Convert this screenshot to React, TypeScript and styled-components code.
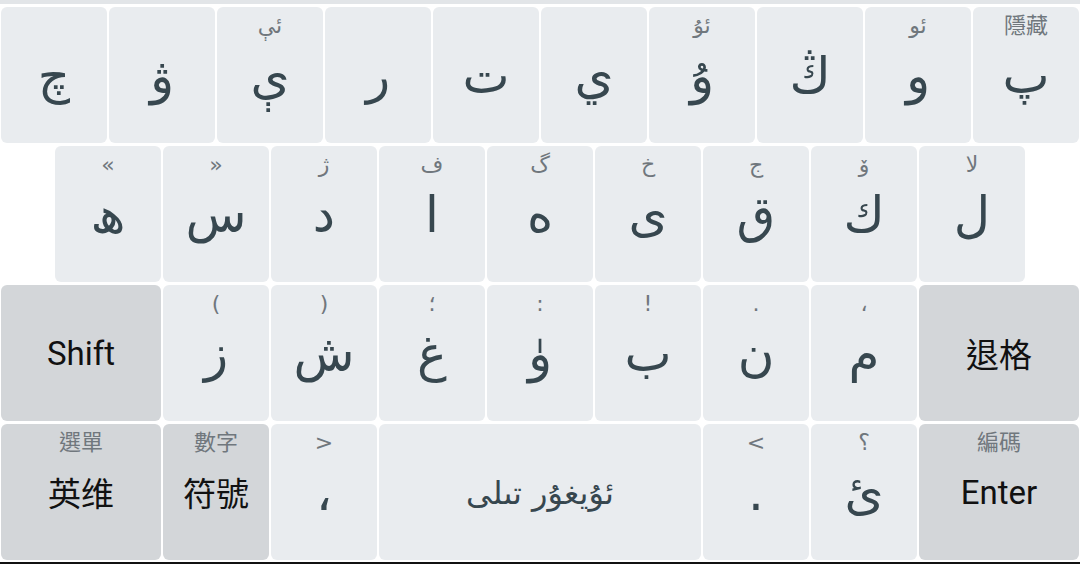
import React from 'react'
import styled, { createGlobalStyle } from 'styled-components'

interface KeyDef {
  main: string;
  hint?: string;
  units?: number;
  fn?: boolean;
  latin?: boolean;
}

const GlobalStyle = createGlobalStyle`
html, body {
  margin:0;
  padding:0;
  background:#fff;
}
body {
  font-family: Roboto, "DejaVu Sans", "Noto Sans CJK TC", sans-serif;
}
`

const Screen = styled.div`
width:1080px;
height:564px;
box-sizing:border-box;
display:flex;
flex-direction:column;
background:#fff;
border-bottom:2px solid #111;
overflow:hidden;
`

const TopBar = styled.div`
height:4px;
flex:none;
background:#e2e5e8;
`

const Board = styled.div`
display:flex;
flex-direction:column;
gap:3px;
padding:3px 1px 0;
`

const Row = styled.div<{ $indent?: number }>`
display:flex;
gap:2px;
height:136px;
padding-left:${(p) => p.$indent ?? 0}px;
`

const Key = styled.div<{ $units: number; $fn?: boolean }>`
flex:none;
width:${(p) => p.$units * 108 - 2}px;
border-radius:6px;
background:${(p) => (p.$fn ? '#d3d6d9' : '#e9ecef')};
display:flex;
flex-direction:column;
align-items:center;
`

const Hint = styled.span`
height:38px;
box-sizing:border-box;
padding-top:5px;
font-size:22px;
line-height:28px;
color:#70777d;
font-family: "DejaVu Sans", "Noto Sans CJK TC", sans-serif;
`

const Label = styled.span<{ $latin?: boolean; $small?: boolean }>`
flex:1;
display:flex;
align-items:center;
justify-content:center;
padding-bottom:${(p) => (p.$latin ? '38px' : '36px')};
font-size:${(p) => (p.$latin ? '33px' : p.$small ? '32px' : '50px')};
color:${(p) => (p.$latin ? '#111' : '#37474f')};
font-family:${(p) =>
  p.$latin
    ? 'Roboto, "Noto Sans CJK TC", sans-serif'
    : '"DejaVu Sans", "Noto Sans CJK TC", sans-serif'};
`

const ROWS: { indent?: number; keys: KeyDef[] }[] = [
  {
    keys: [
      { main: 'چ' },
      { main: 'ۋ' },
      { main: 'ې', hint: 'ئې' },
      { main: 'ر' },
      { main: 'ت' },
      { main: 'ي' },
      { main: 'ۇ', hint: 'ئۇ' },
      { main: 'ڭ' },
      { main: 'و', hint: 'ئو' },
      { main: 'پ', hint: '隱藏' },
    ],
  },
  {
    indent: 54,
    keys: [
      { main: 'ھ', hint: '«' },
      { main: 'س', hint: '»' },
      { main: 'د', hint: 'ژ' },
      { main: 'ا', hint: 'ف' },
      { main: 'ە', hint: 'گ' },
      { main: 'ى', hint: 'خ' },
      { main: 'ق', hint: 'ج' },
      { main: 'ك', hint: 'ۆ' },
      { main: 'ل', hint: 'لا' },
    ],
  },
  {
    keys: [
      { main: 'Shift', units: 1.5, fn: true, latin: true },
      { main: 'ز', hint: '(' },
      { main: 'ش', hint: ')' },
      { main: 'غ', hint: '؛' },
      { main: 'ۈ', hint: ':' },
      { main: 'ب', hint: '!' },
      { main: 'ن', hint: '.' },
      { main: 'م', hint: '،' },
      { main: '退格', units: 1.5, fn: true, latin: true },
    ],
  },
  {
    keys: [
      { main: '英维', hint: '選單', units: 1.5, fn: true, latin: true },
      { main: '符號', hint: '數字', fn: true, latin: true },
      { main: '،', hint: '>' },
      { main: 'ئۇيغۇر تىلى', units: 3 },
      { main: '.', hint: '<' },
      { main: 'ئ', hint: '؟' },
      { main: 'Enter', hint: '編碼', units: 1.5, fn: true, latin: true },
    ],
  },
]

const App = () => {
  return (
    <Screen>
      <GlobalStyle />
      <TopBar />
      <Board>
        {ROWS.map((row, i) => (
          <Row key={i} $indent={row.indent}>
            {row.keys.map((k, j) => (
              <Key key={j} $units={k.units ?? 1} $fn={k.fn}>
                <Hint>{k.hint ?? ''}</Hint>
                <Label $latin={k.latin} $small={(k.units ?? 1) === 3}>
                  {k.main}
                </Label>
              </Key>
            ))}
          </Row>
        ))}
      </Board>
    </Screen>
  )
}

export default App
